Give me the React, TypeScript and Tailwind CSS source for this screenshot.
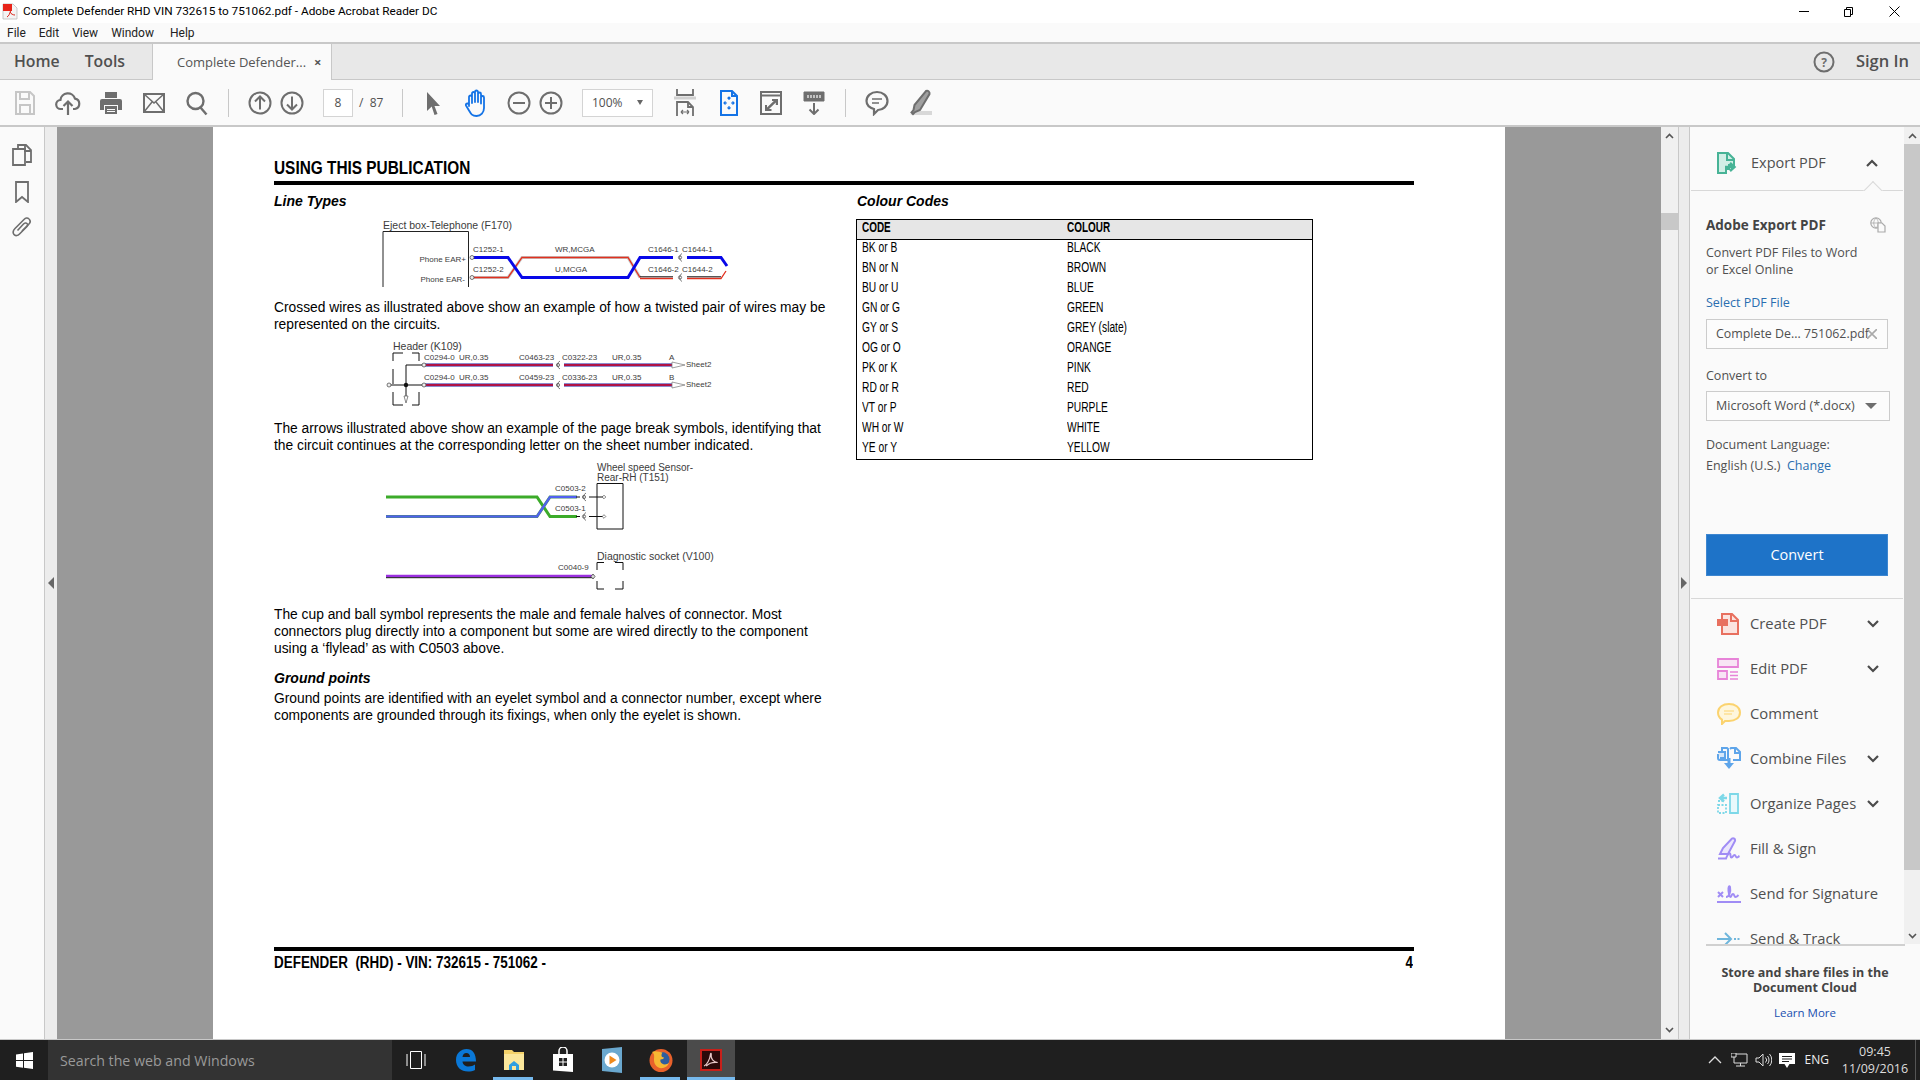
import React from "react";

const narrow = "font-['Liberation_Sans',sans-serif]";

// ---------- small toolbar drawings ----------
function SaveIcon() {
  return (
    <svg width="24" height="26" viewBox="0 0 24 26" fill="none" stroke="#c6c6c6" strokeWidth="2">
      <path d="M3 2h14l4 4v18H3z" />
      <path d="M7 2v7h9V2M7 24v-9h10v9" />
    </svg>
  );
}
function CloudIcon() {
  return (
    <svg width="26" height="26" viewBox="0 0 26 26" fill="none" stroke="#6e6e6e" strokeWidth="2.2">
      <path d="M8 19H6a4.5 4.5 0 0 1-.6-9A7.5 7.5 0 0 1 20 8.6 5.3 5.3 0 0 1 20 19h-2" />
      <path d="M13 25V12M8.5 16l4.5-4.5 4.5 4.5" />
    </svg>
  );
}
function PrintIcon() {
  return (
    <svg width="24" height="26" viewBox="0 0 24 26" fill="#6e6e6e">
      <path d="M6 2h12v6H6z" />
      <path d="M3 9h18a2 2 0 0 1 2 2v9h-4v-5H5v5H1v-9a2 2 0 0 1 2-2z" />
      <path d="M6 16h12v8H6z" />
      <path d="M8 19h8v1H8zM8 21h8v1H8z" fill="#fafafa" />
    </svg>
  );
}
function MailIcon() {
  return (
    <svg width="24" height="22" viewBox="0 0 24 22" fill="none" stroke="#6e6e6e" strokeWidth="2">
      <path d="M2 2h20v18H2z" />
      <path d="M2 2l10 9 10-9M2 20l8-10M22 20l-8-10" strokeWidth="1.5" />
    </svg>
  );
}
function SearchIcon() {
  return (
    <svg width="24" height="26" viewBox="0 0 24 26" fill="none" stroke="#6e6e6e" strokeWidth="2.4">
      <circle cx="10.5" cy="11" r="8" />
      <path d="M15.5 17.5l6 7" />
    </svg>
  );
}
function RoundArrow({ down }: { down?: boolean }) {
  return (
    <svg width="24" height="24" viewBox="0 0 24 24" fill="none" stroke="#6e6e6e" strokeWidth="2">
      <circle cx="12" cy="12" r="10.5" />
      {down ? <path d="M12 5.5v13M7 13.5l5 5 5-5" /> : <path d="M12 18.5v-13M7 10.5l5-5 5 5" />}
    </svg>
  );
}
function RoundSign({ plus }: { plus?: boolean }) {
  return (
    <svg width="24" height="24" viewBox="0 0 24 24" fill="none" stroke="#6e6e6e" strokeWidth="2">
      <circle cx="12" cy="12" r="10.5" />
      <path d={plus ? "M6 12h12M12 6v12" : "M6 12h12"} />
    </svg>
  );
}
function PointerIcon() {
  return (
    <svg width="16" height="24" viewBox="0 0 16 24" fill="#6e6e6e">
      <path d="M2 1l13 14H9.5l3 8-3 1-2.8-8.500L2 20z" />
    </svg>
  );
}
function HandIcon() {
  return (
    <svg width="24" height="28" viewBox="0 0 24 28" fill="none" stroke="#1473e6" strokeWidth="1.800" strokeLinejoin="round">
      <path d="M5 17V8a1.500 1.500 0 0 1 3 0v6V4.500a1.500 1.500 0 0 1 3 0V13V3a1.500 1.500 0 0 1 3 0v10V5a1.500 1.500 0 0 1 3 0v9.500-6a1.500 1.500 0 0 1 3 0V19c0 4.500-3 8-7.500 8S7 25 5 21.500L2 16.500c-.8-1.500 1.500-3 3-1z" />
    </svg>
  );
}
function FitPageIcon() {
  return (
    <svg width="22" height="28" viewBox="0 0 22 28" fill="none" stroke="#6e6e6e" strokeWidth="1.800">
      <path d="M3 0v6h16V0" />
      <path d="M0 9h22" stroke="#d0d0d0" strokeWidth="3" />
      <path d="M3 27V13h11l5 5v9" />
      <path d="M14 13v5h5" />
      <path d="M7 23h8M7 23l2-2M7 23l2 2M15 23l-2-2M15 23l-2 2" strokeWidth="1.200" />
    </svg>
  );
}
function ReadIcon() {
  return (
    <svg width="20" height="26" viewBox="0 0 20 26" fill="none" stroke="#1473e6" strokeWidth="2">
      <path d="M2 1h11l5 5v19H2z" />
      <path d="M13 1v5h5" />
      <path d="M10 7v3M8.500 8.500l1.500-1.500 1.500 1.500M10 19v-3M8.500 17.500l1.500 1.500 1.500-1.500M5 13h3M6.500 11.500L5 13l1.500 1.500M15 13h-3M13.500 11.500L15 13l-1.500 1.500" strokeWidth="1.200" />
    </svg>
  );
}
function FullIcon() {
  return (
    <svg width="22" height="24" viewBox="0 0 22 24" fill="none" stroke="#6e6e6e" strokeWidth="2">
      <path d="M1 1h20v22H1z" />
      <path d="M1 4.500h20" />
      <path d="M12 8h6v6h-2.200V11.500L9 18h2.500v2H5v-6h2v2.500L13.800 10H12z" fill="#6e6e6e" stroke="none" />
    </svg>
  );
}
function RulerDownIcon() {
  return (
    <svg width="22" height="24" viewBox="0 0 22 24" fill="none" stroke="#6e6e6e">
      <path d="M1 1h20v9H1z" fill="#6e6e6e" />
      <path d="M5 4v3M8 4v3M11 4v3M14 4v3M17 4v3" stroke="#fafafa" strokeWidth="1.200" />
      <path d="M11 12v11M6.500 18.500l4.500 4.500 4.500-4.500" strokeWidth="2" />
    </svg>
  );
}
function BubbleIcon() {
  return (
    <svg width="24" height="26" viewBox="0 0 24 26" fill="none" stroke="#6e6e6e" strokeWidth="2.200">
      <path d="M12 2c6 0 10.500 4 10.500 9s-4.500 9-9.500 9l-4 4v-5C4 17.500 1.500 14.500 1.500 11 1.500 6 6 2 12 2z" />
      <path d="M7 9h10M7 13h7" strokeWidth="1.500" />
    </svg>
  );
}
function PenIcon() {
  return (
    <svg width="26" height="28" viewBox="0 0 26 28" fill="none">
      <path d="M11 22h14v4H3z" fill="#d8d8d8" />
      <path d="M19 2c2-1 4 1 3.500 3L13 21l-5 2-2 2-1.500-1.500 2-2.500 1-5z" fill="#a0a0a0" stroke="#6e6e6e" strokeWidth="2" />
    </svg>
  );
}
function Sep({ cls }: { cls: string }) {
  return <div className={`w-px h-[28px] bg-[#c8c8c8] ${cls}`} />;
}

// ---------- wiring diagrams ----------
function Cup({ x, y }: { x: number; y: number }) {
  return (
    <g fill="none" stroke="#555" strokeWidth="0.8">
      <circle cx={x} cy={y} r="1.600" />
      <path d={`M${x + 2} ${y - 4}a4.500 4.500 0 0 0 0 8`} />
    </g>
  );
}
function Lbl({ x, y, s = 8, children }: { x: number; y: number; s?: number; children: React.ReactNode }) {
  return (
    <text x={x} y={y} fontSize={s} fill="#3c3c3c" dominantBaseline="central">
      {children}
    </text>
  );
}
function TwistedPair() {
  const upper = "M473 257.500H508L522 277.500H628L640 257.500H673";
  const lower = "M473 277.500H508L522 257.500H628L640 277.500";
  return (
    <svg viewBox="370 210 380 77" className="block ml-[96px] w-[380px] h-[77px] font-['Liberation_Sans',sans-serif]">
      <Lbl x={383} y={225} s={10.500}>Eject box-Telephone (F170)</Lbl>
      <path d="M383 287V231.500H468.500V287" fill="none" stroke="#222" strokeWidth="1" />
      <text x={466} y={259} fontSize="8" textAnchor="end" fill="#3c3c3c" dominantBaseline="central">Phone EAR+</text>
      <text x={465} y={279} fontSize="8" textAnchor="end" fill="#3c3c3c" dominantBaseline="central">Phone EAR-</text>
      <Lbl x={473} y={249}>C1252-1</Lbl>
      <Lbl x={473} y={269}>C1252-2</Lbl>
      <Lbl x={555} y={249}>WR,MCGA</Lbl>
      <Lbl x={555} y={269}>U,MCGA</Lbl>
      <Lbl x={648} y={249}>C1646-1</Lbl>
      <Lbl x={682} y={249}>C1644-1</Lbl>
      <Lbl x={648} y={269}>C1646-2</Lbl>
      <Lbl x={682} y={269}>C1644-2</Lbl>
      <path d={lower} fill="none" stroke="#c8c8c8" strokeWidth="3" />
      <path d={lower} fill="none" stroke="#e2301e" strokeWidth="1.300" />
      <path d={upper} fill="none" stroke="#0808e8" strokeWidth="3" />
      <path d="M687 257.500H721L727 266" fill="none" stroke="#0808e8" strokeWidth="3" />
      <path d="M640 278.500H673M687 278.500H721L726 271" fill="none" stroke="#e2301e" strokeWidth="1.300" />
      <path d="M640 276.800H673M687 276.800H721" fill="none" stroke="#111" strokeWidth="1" />
      <Cup x={680} y={257.500} />
      <Cup x={680} y={277.500} />
      <circle cx={472} cy={257.500} r="2" fill="#eee" stroke="#555" strokeWidth="0.800" />
      <circle cx={472} cy={277.500} r="2" fill="#eee" stroke="#555" strokeWidth="0.800" />
    </svg>
  );
}
function PageBreak() {
  const wire = (y: number) => `M425 ${y}H553M564 ${y}H672`;
  return (
    <svg viewBox="370 338 380 72" className="block ml-[96px] w-[380px] h-[72px] font-['Liberation_Sans',sans-serif]">
      <Lbl x={393} y={346} s={10.500}>Header (K109)</Lbl>
      {[357, 377].map((y, i) => (
        <g key={y}>
          <Lbl x={424} y={y}>C0294-0</Lbl>
          <Lbl x={459} y={y}>UR,0.35</Lbl>
          <Lbl x={519} y={y}>{i ? "C0459-23" : "C0463-23"}</Lbl>
          <Lbl x={562} y={y}>{i ? "C0336-23" : "C0322-23"}</Lbl>
          <Lbl x={612} y={y}>UR,0.35</Lbl>
          <Lbl x={669} y={y}>{i ? "B" : "A"}</Lbl>
          <Lbl x={686} y={y + 7}>Sheet2</Lbl>
          <path d={wire(y + 8)} fill="none" stroke="#1c1ca0" strokeWidth="3.200" />
          <path d={wire(y + 8)} fill="none" stroke="#e01028" strokeWidth="1.600" />
          <Cup x={558} y={y + 8} />
          <path d={`M672 ${y + 5}l13 3-13 3z`} fill="#fff" stroke="#777" strokeWidth="0.700" />
          <circle cx={424} cy={y + 8} r="2" fill="#eee" stroke="#555" strokeWidth="0.800" />
        </g>
      ))}
      <g fill="none" stroke="#111" strokeWidth="1">
        <path d="M393 361V353H403M412 353H419V361M393 369V384M393 392V405H403M412 405H419V392" />
        <path d="M422 365H406V398M390 385H422" />
      </g>
      <circle cx={406} cy={385} r="2.200" fill="#111" />
      <path d="M404 396l2 7 2-7z" fill="#fff" stroke="#555" strokeWidth="0.700" />
      <circle cx={389} cy={385} r="2" fill="#eee" stroke="#555" strokeWidth="0.800" />
    </svg>
  );
}
function Flylead() {
  return (
    <svg viewBox="370 460 380 135" className="block ml-[96px] w-[380px] h-[135px] font-['Liberation_Sans',sans-serif]">
      <Lbl x={597} y={467} s={10}>Wheel speed Sensor-</Lbl>
      <Lbl x={597} y={477} s={10}>Rear-RH (T151)</Lbl>
      <path d="M597 483.500H623V529H597z" fill="none" stroke="#111" strokeWidth="1" />
      <Lbl x={555} y={488}>C0503-2</Lbl>
      <Lbl x={555} y={508}>C0503-1</Lbl>
      <path d="M386 497H537L550 516.500H577" fill="none" stroke="#3cab2a" strokeWidth="3" />
      <path d="M386 516.500H537L550 497H577" fill="none" stroke="#4a8a70" strokeWidth="3" />
      <path d="M386 516.500H537L550 497H577" fill="none" stroke="#5060f0" strokeWidth="2.200" />
      {[497, 516.500].map((y) => (
        <g key={y}>
          <Cup x={584} y={y} />
          <path d={`M576 ${y}H580M589 ${y}H604`} stroke="#111" strokeWidth="1" />
          <path d={`M604 ${y - 1.800}l1.800 1.800-1.800 1.800-1.800-1.800z`} fill="#fff" stroke="#333" strokeWidth="0.600" />
        </g>
      ))}
      <Lbl x={597} y={556} s={10.500}>Diagnostic socket (V100)</Lbl>
      <Lbl x={558} y={567}>C0040-9</Lbl>
      <path d="M386 576H592" stroke="#9b30e0" strokeWidth="2.400" />
      <path d="M386 577.700H592" stroke="#111" strokeWidth="1" />
      <path d="M593 574l2 2.500-2 2.500-2-2.500z" fill="#ddd" stroke="#444" strokeWidth="0.800" />
      <path d="M597 570V562.500H604M615 562.500H623V570M597 581V589H604M615 589H623V581" fill="none" stroke="#111" strokeWidth="1" />
    </svg>
  );
}

const colourCodes = [
  ["BK or B", "BLACK"],
  ["BN or N", "BROWN"],
  ["BU or U", "BLUE"],
  ["GN or G", "GREEN"],
  ["GY or S", "GREY (slate)"],
  ["OG or O", "ORANGE"],
  ["PK or K", "PINK"],
  ["RD or R", "RED"],
  ["VT or P", "PURPLE"],
  ["WH or W", "WHITE"],
  ["YE or Y", "YELLOW"],
];

function Page() {
  const body = "font-['Liberation_Sans',sans-serif] text-[13.800px] leading-[17px] text-black";
  const heading = "font-['Liberation_Sans',sans-serif] text-[14px] font-bold italic leading-[18px] text-black";
  return (
    <div className="w-[1292px] shrink-0 bg-white flex flex-col pl-[61px] pr-[91px] pt-[30px] pb-[66px]">
      <div className={`${narrow} font-bold text-[19px] leading-[21px] h-[24px] text-black origin-left scale-x-[0.81] whitespace-nowrap`}>USING THIS PUBLICATION</div>
      <div className="h-[4px] bg-black" />
      <div className="flex mt-[7px]">
        <div className="w-[583px] shrink-0">
          <div className={heading}>Line Types</div>
          <TwistedPair />
          <p className={`${body} mt-[12px]`}>
            Crossed wires as illustrated above show an example of how a twisted pair of wires may be
            <br />represented on the circuits.
          </p>
          <div className="mt-[5px]"><PageBreak /></div>
          <p className={`${body} mt-[10px]`}>
            The arrows illustrated above show an example of the page break symbols, identifying that
            <br />the circuit continues at the corresponding letter on the sheet number indicated.
          </p>
          <div className="mt-[6px]"><Flylead /></div>
          <p className={`${body} mt-[11px]`}>
            The cup and ball symbol represents the male and female halves of connector. Most
            <br />connectors plug directly into a component but some are wired directly to the component
            <br />using a ‘flylead’ as with C0503 above.
          </p>
          <div className={`${heading} mt-[12px]`}>Ground points</div>
          <p className={`${body} mt-[3px]`}>
            Ground points are identified with an eyelet symbol and a connector number, except where
            <br />components are grounded through its fixings, when only the eyelet is shown.
          </p>
        </div>
        <div>
          <div className={heading}>Colour Codes</div>
          <div className={`w-[457px] h-[241px] overflow-hidden mt-[9px] -ml-px border border-black ${narrow} text-[14px] leading-[15px] text-black`}>
            <div className="flex h-[20px] bg-[#e6e6e6] border-b border-black font-bold">
              <div className="w-[210px] pl-[5px]"><div className="origin-left scale-x-[0.71]">CODE</div></div>
              <div className="origin-left scale-x-[0.71]">COLOUR</div>
            </div>
            {colourCodes.map(([code, name]) => (
              <div key={code} className="flex h-[20px]">
                <div className="w-[210px] pl-[5px]"><div className="origin-left scale-x-[0.73] whitespace-nowrap">{code}</div></div>
                <div className="origin-left scale-x-[0.73] whitespace-nowrap">{name}</div>
              </div>
            ))}
          </div>
        </div>
      </div>
      <div className="mt-auto h-[4px] bg-black" />
      <div className={`${narrow} font-bold text-[16px] leading-[22px] h-[22px] pt-px text-black flex justify-between pr-[1px] whitespace-pre`}>
        <div className="origin-left scale-x-[0.84]">DEFENDER  (RHD) - VIN: 732615 - 751062 -</div>
        <div className="origin-right scale-x-[0.84]">4</div>
      </div>
    </div>
  );
}

// ---------- tools pane ----------
function Chevron({ up, color = "#4b4b4b" }: { up?: boolean; color?: string }) {
  return (
    <svg width="12" height="8" viewBox="0 0 12 8" fill="none" stroke={color} strokeWidth="2.200">
      <path d={up ? "M1 7l5-5 5 5" : "M1 1l5 5 5-5"} />
    </svg>
  );
}
function SmallArrow({ up }: { up?: boolean }) {
  return (
    <svg width="9" height="6" viewBox="0 0 9 6" fill="none" stroke="#555" strokeWidth="1.600">
      <path d={up ? "M1 5l3.500-3.500L8 5" : "M1 1l3.500 3.500L8 1"} />
    </svg>
  );
}
function ExportIcon() {
  return (
    <svg width="21" height="22" viewBox="0 0 21 22">
      <path d="M1 1h10l6 6v6h-5v4h-3v4H1z" fill="#d2efe6" stroke="#47b396" strokeWidth="2" />
      <path d="M10 1v7h7" fill="none" stroke="#47b396" strokeWidth="2" />
      <path d="M8 15h8M13 11l4.500 4-4.500 4" fill="none" stroke="#47b396" strokeWidth="2.400" />
    </svg>
  );
}
function CreateIcon() {
  return (
    <svg width="22" height="22" viewBox="0 0 22 22" fill="none" stroke="#e8705f" strokeWidth="2">
      <path d="M5 8V1h10l6 6v14H5v-8" fill="#fbe3df" />
      <path d="M14 1v7h7" />
      <path d="M1 7h9v5H1z" fill="#e8705f" />
    </svg>
  );
}
function EditIcon() {
  return (
    <svg width="22" height="22" viewBox="0 0 22 22" fill="none" stroke="#e783d8" strokeWidth="1.800">
      <path d="M1 1h20v8H1z" fill="#f8e4f5" />
      <path d="M1 13h9v8H1z" fill="#f8e4f5" />
      <path d="M13 14h8M13 17.500h8M13 21h8" strokeWidth="1.300" />
    </svg>
  );
}
function CommentIcon() {
  return (
    <svg width="24" height="22" viewBox="0 0 24 22" fill="none" stroke="#fbd36f" strokeWidth="2">
      <path d="M12 1c6 0 11 3 11 8.500S18 18 12 18c-1.500 0-3 0-4 0l-3 3v-4.300C2.500 15 1 12.500 1 9.500 1 4 6 1 12 1z" fill="#fef6dc" />
      <path d="M7 8h10M7 11h8" strokeWidth="1.200" />
    </svg>
  );
}
function CombineIcon() {
  return (
    <svg width="24" height="23" viewBox="0 0 24 23" fill="none" stroke="#5ea5ea" strokeWidth="2">
      <path d="M5 5V1h5l1 1v11H3a2 2 0 0 1-2-2V7" />
      <path d="M1 5h7v6H3" fill="#d7e8f9" />
      <path d="M13 2l1-1h5l4 4v8h-7" />
      <path d="M18 1v5h5" />
      <path d="M12 11v6" strokeWidth="3" />
      <path d="M7 16h10l-5 6z" fill="#5ea5ea" stroke="none" />
    </svg>
  );
}
function OrganizeIcon() {
  return (
    <svg width="22" height="21" viewBox="0 0 22 21" fill="none" stroke="#7dd8e8" strokeWidth="1.800">
      <path d="M13 1h8v19h-8z" fill="#e8f9fc" />
      <path d="M1 12h8v8H1z" strokeDasharray="2 1.500" />
      <path d="M10 5H4M7 1.500L3 5l4 3.500" strokeWidth="2.400" />
      <path d="M1 8h6" strokeDasharray="2 1.500" />
    </svg>
  );
}
function FillSignIcon() {
  return (
    <svg width="24" height="24" viewBox="0 0 24 24" fill="none" stroke="#a08cf5" strokeWidth="2">
      <path d="M15 1.500c1.500-1 3.500 .5 3 2.500L11 17H3l3-6z" fill="#ebe6fd" />
      <path d="M1 21.500h8c1-3 3-6 4-5s0 4 1.500 4 1.500-2.500 3-2.500 1 2.500 2.500 2.500 1.500-1 2.500-1.500" />
    </svg>
  );
}
function SendSigIcon() {
  return (
    <svg width="24" height="20" viewBox="0 0 24 20" fill="none" stroke="#a08cf5" strokeWidth="2">
      <path d="M1 8l5 5M6 8l-5 5" />
      <path d="M9 13c3 0 5-5 4-10-.5-2-2 0-1.500 4s1 6 2 6 1-3 2.500-3 1 3 2.500 3 2-1 3-2" />
      <path d="M0 18h24" />
    </svg>
  );
}
function SendTrackIcon() {
  return (
    <svg width="24" height="14" viewBox="0 0 24 14" fill="none" stroke="#6fb6dc" strokeWidth="2">
      <path d="M0 7h14M8 1l6 6-6 6" />
      <path d="M17 7h7" strokeDasharray="2 1.500" />
    </svg>
  );
}

const tools: { name: string; icon: React.ReactNode; more?: boolean }[] = [
  { name: "Create PDF", icon: <CreateIcon />, more: true },
  { name: "Edit PDF", icon: <EditIcon />, more: true },
  { name: "Comment", icon: <CommentIcon /> },
  { name: "Combine Files", icon: <CombineIcon />, more: true },
  { name: "Organize Pages", icon: <OrganizeIcon />, more: true },
  { name: "Fill & Sign", icon: <FillSignIcon /> },
  { name: "Send for Signature", icon: <SendSigIcon /> },
  { name: "Send & Track", icon: <SendTrackIcon /> },
];

function ToolsPane() {
  return (
    <div className="w-[230px] shrink-0 flex flex-col bg-[#fafafa] font-['Open_Sans',sans-serif] text-[#505050]">
      <div className="h-[817px] flex overflow-hidden">
        <div className="w-[214px] shrink-0 overflow-hidden">
          {/* Export PDF */}
          <div className="relative h-[64px] pt-[14px] border-b border-[#d8d8d8] mx-px">
            <div className="h-[44px] flex items-center pl-[26px]">
              <div className="w-[34px]"><ExportIcon /></div>
              <span className="text-[14.500px]">Export PDF</span>
              <div className="ml-auto mr-[25px]"><Chevron up /></div>
            </div>
            <div className="absolute left-[172px] bottom-[-1px] w-[20px] h-[10px] overflow-hidden">
              <div className="w-[14px] h-[14px] mt-[3px] ml-[3px] rotate-45 bg-[#fafafa] border-l border-t border-[#d8d8d8]" />
            </div>
          </div>
          <div className="pl-[16px]">
            <div className="flex items-center mt-[24px] h-[20px] pr-[18px]">
              <span className="text-[13.500px] font-bold text-[#444]">Adobe Export PDF</span>
              <svg className="ml-auto" width="16" height="16" viewBox="0 0 16 16" fill="none" stroke="#aaa" strokeWidth="1.200">
                <circle cx="6" cy="6" r="5.200" />
                <path d="M1 6h10M6 1c-3 3-3 7 0 10M6 1c3 3 3 7 0 10" strokeWidth="0.800" />
                <path d="M8 6h4l3 3v6H8z" fill="#fafafa" />
              </svg>
            </div>
            <p className="mt-[9px] text-[12.500px] leading-[17px]">Convert PDF Files to Word<br />or Excel Online</p>
            <div className="mt-[16px] text-[12.500px] leading-[18px] text-[#2a6eb0]">Select PDF File</div>
            <div className="mt-[7px] w-[182px] h-[30px] border border-[#ccc] bg-[#fcfcfc] flex items-center pl-[9px] relative text-[12.400px] whitespace-nowrap">
              Complete De... 751062.pdf
              <svg className="absolute right-[10px]" width="10" height="10" viewBox="0 0 10 10" stroke="#aaa" strokeWidth="1.600"><path d="M0 0l10 10M10 0L0 10" /></svg>
            </div>
            <div className="mt-[18px] text-[12.500px] leading-[18px]">Convert to</div>
            <div className="mt-[6px] w-[184px] h-[30px] border border-[#ccc] bg-[#fcfcfc] flex items-center pl-[9px] pr-[12px] justify-between text-[12.500px]">
              Microsoft Word (*.docx)
              <div className="w-0 h-0 border-l-[6px] border-r-[6px] border-t-[6px] border-l-transparent border-r-transparent border-t-[#6e6e6e]" />
            </div>
            <div className="mt-[15px] text-[12.500px] leading-[18px]">Document Language:</div>
            <div className="mt-[3px] text-[12.500px] leading-[18px]">English (U.S.)&nbsp; <span className="text-[#2a6eb0]">Change</span></div>
            <div className="mt-[59px] w-[182px] h-[42px] bg-[#1e73c8] text-white flex items-center justify-center text-[14.500px] border border-[#3d86d0]">Convert</div>
          </div>
          <div className="mt-[22px] h-px bg-[#d8d8d8] mx-px" />
          <div className="mt-[2px]">
            {tools.map((t) => (
              <div key={t.name} className="h-[45px] flex items-center">
                <div className="w-[60px] pl-[27px] flex items-center">{t.icon}</div>
                <span className="text-[14.800px] whitespace-nowrap">{t.name}</span>
                {t.more && <div className="ml-auto mr-[25px]"><Chevron /></div>}
              </div>
            ))}
          </div>
        </div>
        <div className="w-[16px] flex flex-col bg-[#f0f0f0]">
          <div className="h-[17px] flex items-center justify-center"><SmallArrow up /></div>
          <div className="h-[726px] bg-[#c8c8c8]" />
          <div className="flex-1" />
          <div className="h-[17px] flex items-center justify-center"><SmallArrow /></div>
        </div>
      </div>
      <div className="ml-[16px] mr-[15px] h-[2px] bg-[#d0d0d0]" />
      <div className="flex-1 flex flex-col items-center pt-[19px] text-[12.500px] font-bold leading-[15px] text-[#444]">
        <div>Store and share files in the</div>
        <div>Document Cloud</div>
        <div className="mt-[10px] font-normal text-[11.500px] text-[#2050b0]">Learn More</div>
      </div>
    </div>
  );
}

// ---------- windows taskbar ----------
function WinLogo() {
  return (
    <svg width="17" height="17" viewBox="0 0 17 17" fill="#fff">
      <path d="M0 2.400l7-1V8H0zM8 1.200L17 0v8H8zM0 9h7v6.700l-7-1zM8 9h9v8l-9-1.200z" />
    </svg>
  );
}
function EdgeIcon() {
  return (
    <svg width="22" height="24" viewBox="0 0 22 24">
      <path d="M1 12C1 5 6 1 11.500 1 17.500 1 21 5.500 21 13.500H7.500c.3 3.500 3 5 6 5 2.500 0 5-.8 6.500-2v5.500C18 23 15.500 23.500 13 23.500 6 23.500 1 19 1 12zm6.500-3H15c0-2.500-1.500-4-3.700-4-2 0-3.500 1.500-3.800 4z" fill="#0a78d7" />
    </svg>
  );
}
function FolderIcon() {
  return (
    <svg width="22" height="24" viewBox="0 0 22 24">
      <path d="M1 2h8l2 2h10v18H1z" fill="#f4d26a" />
      <path d="M1 6h20v16H1z" fill="#fbe79b" />
      <path d="M6 22v-5l5-4 5 4v5z" fill="#2f9fe0" />
      <path d="M9 22v-4h4v4z" fill="#fbe79b" />
    </svg>
  );
}
function StoreIcon() {
  return (
    <svg width="22" height="26" viewBox="0 0 22 26">
      <path d="M7 7V4a4 4 0 0 1 8 0v3" fill="none" stroke="#fff" strokeWidth="1.500" />
      <path d="M1 7h20v18l-20-1.500z" fill="#fff" />
      <path d="M7 11h3.500v3.500H7zM11.500 11H15v3.500h-3.500zM7 15.500h3.500V19H7zM11.500 15.500H15V19h-3.500z" fill="#1f1f1f" />
    </svg>
  );
}
function MediaIcon() {
  return (
    <svg width="20" height="26" viewBox="0 0 20 26">
      <path d="M0 2l20-2v26L0 24z" fill="#6aa8cf" />
      <circle cx="10" cy="13" r="7.500" fill="#fff" />
      <path d="M7.500 8.500l7 4.500-7 4.500z" fill="#f08a1c" />
    </svg>
  );
}
function FirefoxIcon() {
  return (
    <svg width="24" height="26" viewBox="0 0 24 26">
      <circle cx="12" cy="13.500" r="11.500" fill="#e8612b" />
      <circle cx="13" cy="12.500" r="7.500" fill="#2f5d9e" />
      <path d="M3 5c3 2 2 5 2 8 0 5 4 9 9 8 3-.5 5-2.500 6-5-2 1.500-5 2-7 .5-1.500-1-2-2.500-1.500-4 2 0 3.500-1 3.500-2-3 0-3-3-1.500-5C11 5 6 3 3 5z" fill="#f7b733" />
    </svg>
  );
}
function AcrobatTask() {
  return (
    <svg width="22" height="22" viewBox="0 0 22 22">
      <path d="M0 0h22v22H0z" fill="#c8201a" />
      <path d="M2 2h18v18H2z" fill="#2b0a0a" />
      <path d="M4 17c3-1 6-7 6.500-12 .2-1.500 1-.5.7 1-.5 3.500 2 7 6.500 7.500-4-.5-9 1-11.500 3.500" fill="none" stroke="#e8c8c8" strokeWidth="1.200" />
    </svg>
  );
}
function Taskbar() {
  const slot = "h-[40px] flex items-center justify-center relative";
  const running = "absolute bottom-0 h-[3px] bg-[#76b9ed]";
  return (
    <div className="h-[40px] bg-[#1f1f1f] flex font-['Open_Sans',sans-serif] text-white">
      <div className={`${slot} w-[48px]`}><WinLogo /></div>
      <div className="w-[344px] h-[40px] bg-[#333] flex items-center pl-[12px] pt-px text-[14.200px] text-[#9a9a9a]">Search the web and Windows</div>
      <div className={`${slot} w-[48px]`}>
        <svg width="20" height="18" viewBox="0 0 20 18" fill="none" stroke="#fff" strokeWidth="1">
          <path d="M4.500 .5h11v17h-11zM1 3v12M19 3v12" />
        </svg>
      </div>
      <div className={`${slot} w-[48px] ml-[2px]`}><EdgeIcon /></div>
      <div className={`${slot} w-[48px]`}><FolderIcon /><div className={`${running} left-[3px] w-[40px]`} /></div>
      <div className={`${slot} w-[50px]`}><StoreIcon /></div>
      <div className={`${slot} w-[47px]`}><MediaIcon /></div>
      <div className={`${slot} w-[52px]`}><FirefoxIcon /><div className={`${running} left-[5px] w-[40px]`} /></div>
      <div className={`${slot} w-[48px] bg-[#4b4b4b]`}><AcrobatTask /><div className={`${running} left-0 w-full`} /></div>
      <div className="ml-auto flex items-center h-[40px]">
        <svg width="14" height="8" viewBox="0 0 14 8" fill="none" stroke="#ddd" strokeWidth="1.300"><path d="M1 7l6-6 6 6" /></svg>
        <svg className="ml-[9px]" width="17" height="14" viewBox="0 0 17 14" fill="none" stroke="#ddd" strokeWidth="1">
          <path d="M3 1h13v9H3zM9.500 10v3M5 13h9" />
          <path d="M0 0h5v4H0z" fill="#1f1f1f" />
        </svg>
        <svg className="ml-[7px]" width="17" height="14" viewBox="0 0 17 14" fill="none" stroke="#ddd" strokeWidth="1">
          <path d="M1 5h3l4-4v12L4 9H1zM10.500 4.500a3.500 3.500 0 0 1 0 5M12.500 3a6 6 0 0 1 0 8M14.500 1a9 9 0 0 1 0 12" />
        </svg>
        <svg className="ml-[7px]" width="16" height="15" viewBox="0 0 16 15" fill="#fff">
          <path d="M0 0h16v11h-5.500L8 15l-2.500-4H0z" />
          <path d="M3 3h10v1H3zM3 5.500h10v1H3zM3 8h7v1H3z" fill="#1f1f1f" />
        </svg>
        <span className="ml-[10px] text-[12px] text-[#eee]">ENG</span>
        <div className="ml-[10px] w-[72px] text-center text-[12.500px] leading-[17px] text-[#ddd] whitespace-nowrap">09:45<br />11/09/2016</div>
        <div className="ml-[4px] mr-[4px] w-px h-[40px] bg-[#555]" />
      </div>
    </div>
  );
}

export default function App() {
  return (
    <div className="w-[1920px] h-[1080px] flex flex-col overflow-hidden bg-white font-['Open_Sans',sans-serif]">
      {/* title bar */}
      <div className="h-[23px] bg-white flex items-center pl-[2px] font-['Roboto',sans-serif] text-[11.800px] text-black">
        <svg width="16" height="17" viewBox="0 0 16 17">
          <path d="M1 1h10l4 4v11H1z" fill="#f4f4f4" stroke="#bbb" strokeWidth="0.800" />
          <path d="M1 1h9v7H1z" fill="#e8241a" />
          <path d="M5 14c2-1 3-4 3.500-6M8 9c1 2 3 3 5 3" fill="none" stroke="#d8241a" strokeWidth="1" />
        </svg>
        <span className="ml-[5px]">Complete Defender RHD VIN 732615 to 751062.pdf - Adobe Acrobat Reader DC</span>
        <div className="ml-auto flex items-center h-full text-[#111]">
          <div className="w-[10px] h-px bg-black mr-[35px]" />
          <svg className="mr-[36px]" width="9" height="10" viewBox="0 0 9 10" fill="none" stroke="#000"><path d="M2.500 2.500V.5h6v7h-2M.5 2.500h6v7h-6z" /></svg>
          <svg className="mr-[20px]" width="11" height="11" viewBox="0 0 11 11" stroke="#000"><path d="M.5 .5l10 10M10.500 .5l-10 10" /></svg>
        </div>
      </div>
      {/* menu bar */}
      <div className="h-[21px] bg-[#fafafa] border-b-2 border-[#c8c8c8] flex items-center font-['Roboto',sans-serif] text-[12px] text-[#222]">
        <span className="ml-[7px]">File</span>
        <span className="ml-[13px]">Edit</span>
        <span className="ml-[13px]">View</span>
        <span className="ml-[13px]">Window</span>
        <span className="ml-[16px]">Help</span>
      </div>
      {/* tabs */}
      <div className="h-[36px] bg-[#e8e8e8] border-b border-[#c8c8c8] flex text-[#505050]">
        <div className="flex items-center w-[152px] pl-[14px] text-[15.800px] font-semibold">
          <span>Home</span>
          <span className="ml-[25px]">Tools</span>
        </div>
        <div className="w-[180px] h-[36px] bg-[#fafafa] border-x border-[#c8c8c8] flex items-center pl-[24px] pt-px text-[13px] text-[#555]">
          <span>Complete Defender...</span>
          <span className="ml-[8px] text-[13px] font-bold leading-none">×</span>
        </div>
        <div className="ml-auto flex items-center">
          <svg width="22" height="22" viewBox="0 0 22 22" fill="none" stroke="#6e6e6e" strokeWidth="2">
            <circle cx="11" cy="11" r="9.500" />
            <text x="11" y="15.500" textAnchor="middle" fontSize="12" fontWeight="700" fill="#6e6e6e" stroke="none">?</text>
          </svg>
          <span className="ml-[21px] mr-[11px] text-[16.500px] font-semibold">Sign In</span>
        </div>
      </div>
      {/* toolbar */}
      <div className="h-[47px] bg-[#fafafa] border-b-2 border-[#c8c8c8] flex items-center pl-[3px] text-[#505050]">
        {[<SaveIcon key="s" />, <CloudIcon key="c" />, <PrintIcon key="p" />, <MailIcon key="m" />, <SearchIcon key="f" />].map((ic, i) => (
          <div key={i} className="w-[43px] flex justify-center">{ic}</div>
        ))}
        <Sep cls="ml-[10px]" />
        <div className="ml-[15px] w-[32px] flex justify-center"><RoundArrow /></div>
        <div className="w-[32px] flex justify-center"><RoundArrow down /></div>
        <div className="ml-[15px] w-[30px] h-[28px] bg-white border border-[#d4d4d4] flex items-center justify-center text-[12px]">8</div>
        <div className="ml-[6px] w-[24px] text-[12px] whitespace-nowrap">/&nbsp; 87</div>
        <Sep cls="ml-[19px]" />
        <div className="ml-[14px] w-[32px] flex justify-center"><PointerIcon /></div>
        <div className="w-[54px] flex justify-center"><HandIcon /></div>
        <div className="w-[32px] flex justify-center"><RoundSign /></div>
        <div className="w-[32px] flex justify-center"><RoundSign plus /></div>
        <div className="ml-[15px] w-[71px] h-[28px] bg-white border border-[#d4d4d4] flex items-center justify-between pl-[9px] pr-[9px] text-[12px]">
          100%
          <div className="w-0 h-0 border-l-[3.500px] border-r-[3.500px] border-t-[5px] border-l-transparent border-r-transparent border-t-[#666]" />
        </div>
        <div className="ml-[16px] w-[32px] flex justify-center"><FitPageIcon /></div>
        <div className="ml-[12px] w-[32px] flex justify-center"><ReadIcon /></div>
        <div className="ml-[10px] w-[32px] flex justify-center"><FullIcon /></div>
        <div className="ml-[11px] w-[32px] flex justify-center"><RulerDownIcon /></div>
        <Sep cls="ml-[15px]" />
        <div className="ml-[15px] w-[32px] flex justify-center"><BubbleIcon /></div>
        <div className="ml-[11px] w-[32px] flex justify-center"><PenIcon /></div>
      </div>
      {/* document area */}
      <div className="flex-1 min-h-0 flex border-b border-[#c8c8c8]">
        <div className="w-[45px] shrink-0 bg-[#fafafa] border-r border-[#c8c8c8] flex flex-col items-center pr-[1px] pt-[17px]">
          <svg width="20" height="22" viewBox="0 0 20 22" fill="none" stroke="#6e6e6e" strokeWidth="1.800">
            <path d="M6 4V1h8l5 5v12h-5" />
            <path d="M13 1v6h6" />
            <path d="M1 5h12v16H1z" />
          </svg>
          <svg className="mt-[15px]" width="14" height="22" viewBox="0 0 14 22" fill="none" stroke="#6e6e6e" strokeWidth="1.800">
            <path d="M1 1h12v20l-6-5-6 5z" />
          </svg>
          <svg className="mt-[14px]" width="20" height="20" viewBox="0 0 20 20" fill="none" stroke="#6e6e6e" strokeWidth="1.600">
            <path d="M17 2c-1.500-1.500-3.500-1-5 .5L3 11.500c-2 2-2.500 4-1 6s4 1 5.500-.5l7-7c1-1 1.500-2.500.5-3.500s-2.500-.5-3.500.5L5.500 13.500" />
            <path d="M17 2c1.500 1.500 1.500 3.500 0 5l-7 7" />
          </svg>
        </div>
        <div className="w-[12px] shrink-0 bg-[#ececec] flex items-center justify-center">
          <div className="w-0 h-0 border-y-[6px] border-r-[6px] border-y-transparent border-r-[#666]" />
        </div>
        <div className="flex-1 bg-[#999999] flex justify-center">
          <Page />
        </div>
        <div className="w-[17px] shrink-0 bg-[#f0f0f0] flex flex-col items-center">
          <div className="h-[18px] flex items-center"><SmallArrow up /></div>
          <div className="mt-[68px] w-full h-[17px] bg-[#c8c8c8]" />
          <div className="mt-auto h-[18px] flex items-center"><SmallArrow /></div>
        </div>
        <div className="w-[12px] shrink-0 bg-[#ececec] border-x border-[#c8c8c8] flex items-center justify-center">
          <div className="w-0 h-0 border-y-[6px] border-l-[6px] border-y-transparent border-l-[#666]" />
        </div>
        <ToolsPane />
      </div>
      <Taskbar />
    </div>
  );
}
